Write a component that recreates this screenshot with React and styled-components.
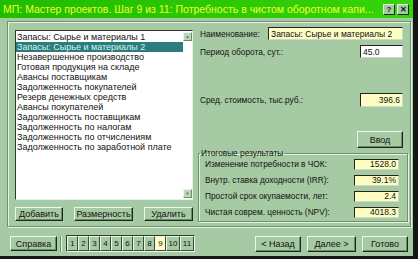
import styled, { createGlobalStyle } from "styled-components";

const items = [
  "Запасы: Сырье и материалы 1",
  "Запасы: Сырье и материалы 2",
  "Незавершенное производство",
  "Готовая продукция на складе",
  "Авансы поставщикам",
  "Задолженность покупателей",
  "Резерв денежных средств",
  "Авансы покупателей",
  "Задолженность поставщикам",
  "Задолженность по налогам",
  "Задолженность по отчислениям",
  "Задолженность по заработной плате",
];

const results = [
  ["Изменение потребности в ЧОК:", "1528.0"],
  ["Внутр. ставка доходности (IRR):", "39.1%"],
  ["Простой срок окупаемости, лет:", "2.4"],
  ["Чистая соврем. ценность (NPV):", "4018.3"],
];

const steps = ["1", "2", "3", "4", "5", "6", "7", "8", "9", "10", "11"];

export default function App() {
  return (
    <>
      <GlobalStyle />
      <Window>
        <TitleBar>
          <Title>МП: Мастер проектов. Шаг 9 из 11: Потребность в чистом оборотном капи...</Title>
          <TitleButton>?</TitleButton>
          <TitleButton>✕</TitleButton>
        </TitleBar>
        <Content>
          <Panel>
            <LeftColumn>
              <ListBox>
                <ListItems>
                  {items.map((it, i) => (
                    <ListItem key={it} selected={i === 1}>
                      {it}
                    </ListItem>
                  ))}
                </ListItems>
                <ScrollBar>
                  <ScrollArrow>▲</ScrollArrow>
                  <ScrollArrow>▼</ScrollArrow>
                </ScrollBar>
              </ListBox>
              <ButtonRow>
                <Button w={48}>Добавить</Button>
                <Button w={59}>Размерность</Button>
                <Button w={49}>Удалить</Button>
              </ButtonRow>
            </LeftColumn>
            <RightColumn>
              <FieldRow mt={5}>
                <Label>Наименование:</Label>
                <Field w={135} h={13} yellow>
                  Запасы: Сырье и материалы 2
                </Field>
              </FieldRow>
              <FieldRow mt={5}>
                <Label>Период оборота, сут.:</Label>
                <Field w={43} h={13}>
                  45.0
                </Field>
              </FieldRow>
              <FieldRow mt={35}>
                <Label>Сред. стоимость, тыс.руб.:</Label>
                <Field w={43} h={14} yellow right>
                  396.6
                </Field>
              </FieldRow>
              <FieldRow mt={24}>
                <span />
                <Button w={46} h={17}>
                  Ввод
                </Button>
              </FieldRow>
              <GroupBox>
                <Legend>Итоговые результаты</Legend>
                {results.map(([label, value]) => (
                  <ResultRow key={label}>
                    <Label>{label}</Label>
                    <Field w={45} h={11} yellow right>
                      {value}
                    </Field>
                  </ResultRow>
                ))}
              </GroupBox>
            </RightColumn>
          </Panel>
        </Content>
        <BottomBar>
          <Button w={47} h={15}>
            Справка
          </Button>
          <Separator />
          <Steps>
            {steps.map((s) => (
              <Step key={s} wide={s.length > 1} active={s === "9"}>
                {s}
              </Step>
            ))}
          </Steps>
          <Spacer />
          <Button w={46} h={16}>
            &lt; Назад
          </Button>
          <Button w={49} h={16}>
            Далее &gt;
          </Button>
          <Button w={46} h={16}>
            Готово
          </Button>
        </BottomBar>
      </Window>
    </>
  );
}

const GlobalStyle = createGlobalStyle`
  html, body {
    margin: 0;
    padding: 0;
    background: #141814;
  }
  body {
    font-family: "Liberation Sans", Arial, sans-serif;
  }
`;

const Window = styled.div`
  width: 413px;
  height: 256px;
  background: #a6caa3;
  display: flex;
  flex-direction: column;
  overflow: hidden;
`;

const TitleBar = styled.div`
  height: 18px;
  flex-shrink: 0;
  display: flex;
  align-items: center;
  padding: 0 4px 0 3px;
  background: linear-gradient(90deg, #20bc00, #35d40a);
`;

const Title = styled.div`
  flex: 1;
  font-size: 10.5px;
  color: #eeff30;
  white-space: nowrap;
  overflow: hidden;
`;

const TitleButton = styled.div`
  width: 10px;
  height: 9px;
  margin-left: 2px;
  background: #a6caa3;
  border: 1px solid;
  border-color: #eef6ec #1e2a1e #1e2a1e #eef6ec;
  font-size: 8px;
  font-weight: bold;
  line-height: 9px;
  text-align: center;
  color: #111;
`;

const Content = styled.div`
  padding: 3px 2px 0 7px;
`;

const Panel = styled.div`
  height: 204px;
  display: flex;
  border: 1px solid #6f906c;
  box-shadow: inset 1px 1px 0 #e6f2e4, 1px 1px 0 #e6f2e4;
`;

const LeftColumn = styled.div`
  width: 178px;
  margin: 8px 0 0 7px;
  display: flex;
  flex-direction: column;
`;

const ListBox = styled.div`
  height: 170px;
  display: flex;
  background: #fff;
  border: 1px solid;
  border-color: #2e3a2e #e6f2e4 #e6f2e4 #2e3a2e;
  box-sizing: border-box;
`;

const ListItems = styled.div`
  flex: 1;
  padding-top: 1px;
`;

const ListItem = styled.div`
  height: 10px;
  line-height: 10px;
  font-size: 9px;
  padding-left: 1px;
  white-space: nowrap;
  color: ${(p) => (p.selected ? "#d6f4ee" : "#111")};
  background: ${(p) => (p.selected ? "#2b7c7c" : "transparent")};
`;

const ScrollBar = styled.div`
  width: 9px;
  display: flex;
  flex-direction: column;
  justify-content: space-between;
  padding: 1px 0;
  background: #fff;
`;

const ScrollArrow = styled.div`
  width: 7px;
  height: 7px;
  background: #b9d6b6;
  border: 1px solid;
  border-color: #eef6ec #6d8d6a #6d8d6a #eef6ec;
  font-size: 4px;
  line-height: 7px;
  text-align: center;
  color: #555;
`;

const ButtonRow = styled.div`
  margin-top: 7px;
  display: flex;
  justify-content: space-between;
`;

const Button = styled.div`
  width: ${(p) => p.w}px;
  height: ${(p) => p.h || 14}px;
  box-sizing: border-box;
  display: flex;
  align-items: center;
  justify-content: center;
  background: #a6caa3;
  border: 1px solid #1c281c;
  border-top-color: #eef6ec;
  border-left-color: #eef6ec;
  box-shadow: inset -1px -1px 0 #6d8d6a;
  font-size: 9px;
  color: #111;
  white-space: nowrap;
`;

const RightColumn = styled.div`
  flex: 1;
  margin: 0 2px 0 5px;
  display: flex;
  flex-direction: column;
`;

const FieldRow = styled.div`
  margin-top: ${(p) => p.mt}px;
  display: flex;
  align-items: center;
  justify-content: space-between;
  padding: 0 5px 0 2px;
`;

const Label = styled.span`
  font-size: 8.3px;
  color: #111;
  white-space: nowrap;
`;

const Field = styled.div`
  width: ${(p) => p.w}px;
  height: ${(p) => p.h}px;
  box-sizing: border-box;
  display: flex;
  align-items: center;
  justify-content: ${(p) => (p.right ? "flex-end" : "flex-start")};
  padding: 0 2px;
  background: ${(p) => (p.yellow ? "#fdfdc4" : "#fff")};
  border: 1px solid #1e261e;
  border-right-color: #c8dcc6;
  border-bottom-color: #c8dcc6;
  font-size: 8.5px;
  color: #111;
  white-space: nowrap;
`;

const GroupBox = styled.fieldset`
  margin: 0;
  padding: 0 8px 3px 6px;
  border: 1px solid #6f906c;
  box-shadow: inset 1px 1px 0 #e6f2e4, 1px 1px 0 #e6f2e4;
  display: flex;
  flex-direction: column;
  gap: 4px;
`;

const Legend = styled.legend`
  padding: 0 1px;
  margin-left: -5px;
  font-size: 8.3px;
  line-height: 10px;
  color: #111;
`;

const ResultRow = styled.div`
  height: 12px;
  display: flex;
  align-items: center;
  justify-content: space-between;
`;

const BottomBar = styled.div`
  margin-top: 8px;
  padding: 0 5px 0 10px;
  display: flex;
  align-items: center;
  gap: 6px;
`;

const Separator = styled.div`
  width: 0;
  height: 16px;
  margin: 0 -2px 0 -3px;
  border-left: 1px solid #6d8d6a;
  border-right: 1px solid #eef6ec;
`;

const Steps = styled.div`
  display: flex;
  border: 1px solid #2e3a2e;
  border-right-color: #eef6ec;
  border-bottom-color: #eef6ec;
`;

const Step = styled.div`
  width: ${(p) => (p.wide ? 14 : 11)}px;
  height: 15px;
  box-sizing: border-box;
  display: flex;
  align-items: center;
  justify-content: center;
  border: 1px solid #3a4a3a;
  border-top-color: #eef6ec;
  border-left-color: #eef6ec;
  background: ${(p) => (p.active ? "#fdfdc4" : "#a6caa3")};
  font-size: 8px;
  color: #111;
`;

const Spacer = styled.div`
  flex: 1;
`;
